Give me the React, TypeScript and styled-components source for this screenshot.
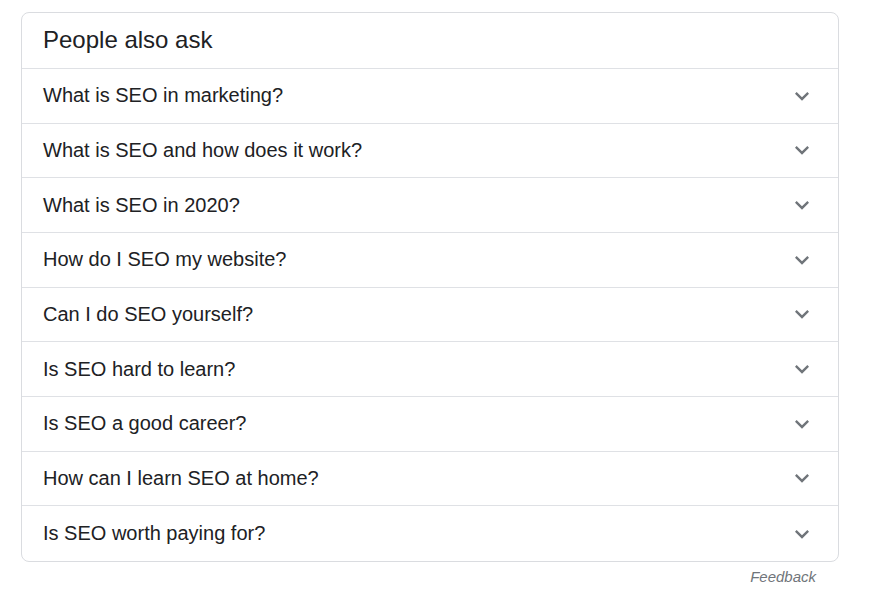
import React from "react";
import styled, { createGlobalStyle } from "styled-components";

const Global = createGlobalStyle`
  html, body { margin: 0; padding: 0; background: #fff; }
  body { font-family: Arial, "Liberation Sans", sans-serif; }
`;

const Page = styled.div`
  padding: 12px 30px 0 21px;
  width: 869px;
  box-sizing: border-box;
`;

const Card = styled.div`
  width: 818px;
  box-sizing: border-box;
  border: 1px solid #dadce0;
  border-radius: 8px;
  overflow: hidden;
`;

const Header = styled.div`
  height: 56px;
  display: flex;
  align-items: center;
  padding: 0 0 1px 21px;
  font-size: 24px;
  color: #202124;
  border-bottom: 1px solid #dfe1e5;
  box-sizing: border-box;
`;

const Row = styled.div<{ $last?: boolean }>`
  height: 54.67px;
  display: flex;
  align-items: center;
  justify-content: space-between;
  padding: 0 22px 0 21px;
  box-sizing: border-box;
  font-size: 20px;
  color: #202124;
  border-bottom: ${(p) => (p.$last ? "none" : "1px solid #dfe1e5")};
`;

const Chevron = styled.svg`
  width: 28px;
  height: 28px;
  fill: #70757a;
`;

const Footer = styled.div`
  display: flex;
  justify-content: flex-end;
  padding: 6px 23px 0 0;
  width: 818px;
  box-sizing: border-box;
`;

const Feedback = styled.span`
  font-size: 15px;
  font-style: italic;
  color: #70757a;
`;

const questions = [
  "What is SEO in marketing?",
  "What is SEO and how does it work?",
  "What is SEO in 2020?",
  "How do I SEO my website?",
  "Can I do SEO yourself?",
  "Is SEO hard to learn?",
  "Is SEO a good career?",
  "How can I learn SEO at home?",
  "Is SEO worth paying for?",
];

export default function App() {
  return (
    <>
      <Global />
      <Page>
        <Card>
          <Header>People also ask</Header>
          {questions.map((q, i) => (
            <Row key={q} $last={i === questions.length - 1}>
              <span>{q}</span>
              <Chevron viewBox="0 0 24 24">
                <path d="M16.59 8.59L12 13.17 7.41 8.59 6 10l6 6 6-6z" />
              </Chevron>
            </Row>
          ))}
        </Card>
        <Footer>
          <Feedback>Feedback</Feedback>
        </Footer>
      </Page>
    </>
  );
}
